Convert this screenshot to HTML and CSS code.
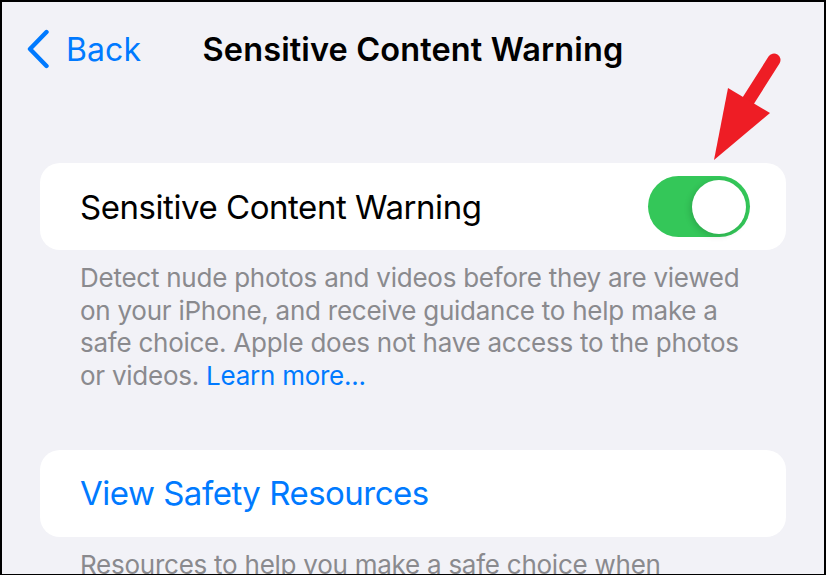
FILE: index.html
```html
<!DOCTYPE html>
<html lang="en">
<head>
<meta charset="utf-8">
<title>Sensitive Content Warning</title>
<link rel="stylesheet" href="styles.css">
</head>
<body>
<div class="screen">
  <header class="nav">
    <a class="back" href="#">
      <svg class="chev" width="24" height="40" viewBox="0 0 24 40" aria-hidden="true">
        <polyline points="19.5,3 3,20 19.5,37" fill="none" stroke="#007aff" stroke-width="4.4" stroke-linecap="round" stroke-linejoin="round"/>
      </svg>
      <span>Back</span>
    </a>
    <h1 class="title">Sensitive Content Warning</h1>
    <div class="spacer"></div>
  </header>

  <main class="content">
    <section class="group">
      <div class="card row">
        <span class="label">Sensitive Content Warning</span>
        <span class="toggle on"><span class="knob"></span></span>
      </div>
      <p class="footer">Detect nude photos and videos before they are viewed on your iPhone, and receive guidance to help make a safe choice. Apple does not have access to the photos or videos. <a href="#" class="link">Learn more...</a></p>
    </section>

    <section class="group second">
      <div class="card row">
        <span class="label link">View Safety Resources</span>
      </div>
      <p class="footer">Resources to help you make a safe choice when</p>
    </section>
  </main>

  <svg class="annot" width="90" height="120" viewBox="0 0 90 120" aria-hidden="true">
    <line x1="70" y1="9" x2="44" y2="50" stroke="#ee1d25" stroke-width="13" stroke-linecap="round"/>
    <polygon points="24,37 66,62 10,109" fill="#ee1d25"/>
  </svg>
</div>
</body>
</html>
```

FILE: styles.css
```css
* { box-sizing: border-box; }
html, body { margin: 0; padding: 0; }
body {
  width: 826px;
  height: 575px;
  overflow: hidden;
  font-family: Inter, "Noto Sans", "Liberation Sans", sans-serif;
  background: #000;
}
.screen {
  position: relative;
  width: 826px;
  height: 575px;
  border-style: solid;
  border-color: #000;
  border-width: 2px 2px 1px 2px;
  background: #f2f2f7;
  overflow: hidden;
}
.nav {
  height: 94px;
  display: grid;
  grid-template-columns: 1fr auto 1fr;
  align-items: center;
}
.back {
  display: flex;
  align-items: center;
  gap: 15px;
  padding-left: 25px;
  color: #007aff;
  text-decoration: none;
  font-size: 32px;
  letter-spacing: 0.1px;
}
.chev { display: block; }
.title {
  margin: 0;
  font-size: 32.5px;
  font-weight: 600;
  color: #000;
  letter-spacing: 0.12px;
}
.content {
  padding: 67px 38px 0 38px;
}
.card {
  background: #fff;
  border-radius: 20px;
  height: 87px;
}
.row {
  display: flex;
  align-items: center;
  justify-content: space-between;
  padding: 0 36px 0 40px;
}
.label {
  font-size: 33px;
  color: #000;
  letter-spacing: -0.45px;
}
.label.link { color: #007aff; letter-spacing: -0.5px; }
.toggle {
  width: 102px;
  height: 61px;
  border-radius: 31px;
  background: #34c759;
  display: flex;
  align-items: center;
  justify-content: flex-end;
  padding: 0 4px;
}
.knob {
  width: 54px;
  height: 54px;
  border-radius: 50%;
  background: #fff;
  box-shadow: -2px 2px 6px rgba(0,0,0,0.15);
}
.footer {
  margin: 12px 0 0 0;
  padding: 0 40px;
  font-size: 26px;
  line-height: 32.7px;
  color: #8a8a8e;
  letter-spacing: -0.25px;
}
.link { color: #007aff; text-decoration: none; }
.second { margin-top: 57px; }
.annot {
  position: absolute;
  left: 702px;
  top: 49px;
}
```
